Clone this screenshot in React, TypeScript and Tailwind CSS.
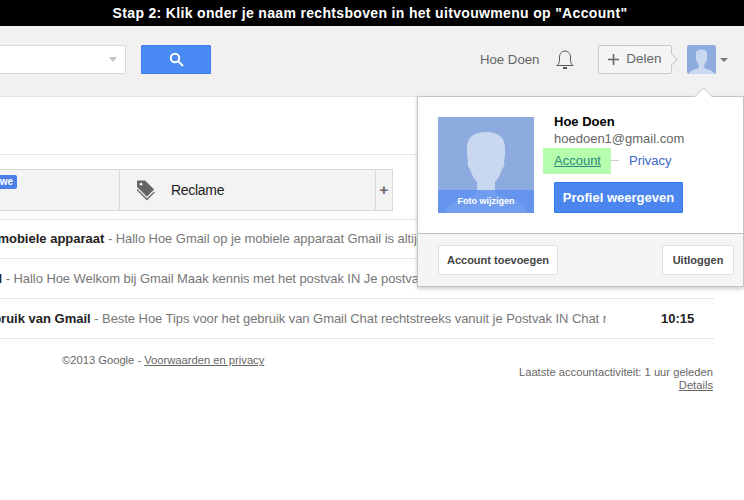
const FONT = "font-['Liberation_Sans',Arial,sans-serif]";

// mails: negatieve marge knipt het onderwerp links af, zoals in de schermafbeelding
function MailRow({ subject, body, time, clipClass, heightClass }: { subject: string; body: string; time?: string; clipClass: string; heightClass: string }) {
  return (
    <div className={`flex ${heightClass} items-center border-b border-[#e5e5e5]`}>
      <div className="w-[606px] overflow-hidden whitespace-nowrap text-[13px]">
        <div className={`flex ${clipClass}`}>
          <b className="font-bold text-[#222]">{subject}</b>
          <span className="whitespace-pre tracking-[-0.06px] text-[#777]"> - {body}</span>
        </div>
      </div>
      {time && <div className="ml-[55px] text-[13px] font-bold text-[#222]">{time}</div>}
    </div>
  );
}

function Avatar({ size }: { size: number }) {
  return (
    <svg width={size} height={size} viewBox="0 0 96 96" className="block">
      <rect width="96" height="96" fill="#8eabdf" />
      <path
        d="M48 15c-12 0-19 5-19 16 0 5 0 9 1 13-1 3 0 6 2 8 2 6 4 10 7 13v8c0 3-2 5-6 6-14 4-24 7-27 17h84c-3-10-13-13-27-17-4-1-6-3-6-6v-8c3-3 5-7 7-13 2-2 3-5 2-8 1-4 1-8 1-13 0-11-7-16-19-16z"
        fill="#c9d8f0"
      />
    </svg>
  );
}

export default function App() {
  return (
    <div className={`${FONT} relative h-[500px] w-[744px] overflow-hidden bg-white`}>
      <div className="flex h-[26px] items-center justify-center bg-black pr-[4px] text-[14px] font-bold tracking-[0.33px] text-white">
        Stap 2: Klik onder je naam rechtsboven in het uitvouwmenu op "Account"
      </div>

      {/* kopbalk */}
      <div className="flex h-[71px] items-center border-b border-[#e5e5e5] bg-[#f1f1f1] pb-[3px]">
        <div className="flex h-[29px] w-[126px] items-center justify-end rounded-r-[2px] border border-l-0 border-[#d9d9d9] bg-white pr-[8px]">
          <div className="h-0 w-0 border-x-[4px] border-t-[5px] border-x-transparent border-t-[#c4c4c4]" />
        </div>
        <button className="ml-[15px] flex h-[29px] w-[70px] items-center justify-center rounded-[1px] border border-[#3f7fe8] bg-[#4a8af4]">
          <svg width="15" height="15" viewBox="0 0 15 15" fill="none" stroke="#fff" strokeWidth="2">
            <circle cx="6" cy="6" r="4.2" />
            <path d="M9 9l5 5" />
          </svg>
        </button>
        <span className="ml-[269px] w-[59px] whitespace-nowrap text-[13.2px] text-[#666]">Hoe Doen</span>
        <svg width="18" height="21" viewBox="0 0 18 21" fill="none" stroke="#555" strokeWidth="1" className="ml-[17px]">
          <path d="M1 16.5h16c-1.500-1.500-2.500-3-2.500-5V8c0-3.500-2.500-6-5.500-6S3.500 4.500 3.500 8v3.500c0 2-1 3.500-2.500 5z" />
          <path d="M7 19h4" strokeWidth="2" />
        </svg>
        <div className="relative ml-[24px] flex h-[29px] w-[74px] items-center justify-center gap-[7px] rounded-[2px] border border-[#c8c8c8] bg-[#f5f5f5] text-[13.5px] text-[#666]">
          <svg width="11" height="11" viewBox="0 0 11 11" stroke="#666" strokeWidth="1.6">
            <path d="M5.500 0v11M0 5.500h11" />
          </svg>
          Delen
          <div className="absolute right-[-5px] top-[9px] h-[9px] w-[9px] rotate-45 border-r border-t border-[#c8c8c8] bg-[#f5f5f5]" />
        </div>
        <div className="ml-[15px] overflow-hidden rounded-[2px]">
          <Avatar size={29} />
        </div>
        <div className="ml-[4px] h-0 w-0 border-x-[4px] border-t-[4px] border-x-transparent border-t-[#777]" />
      </div>

      {/* inhoud */}
      <div className="h-[58px] border-b border-[#e5e5e5]" />
      <div className="mt-[14px] flex h-[42px] w-[393px] border-y border-r border-[#d9d9d9] bg-[#f3f3f3]">
        <div className="relative w-[120px] border-r border-[#d9d9d9]">
          <span className="absolute left-[-26px] top-[5px] rounded-[2px] bg-[#4d80e6] px-[4px] py-[1px] text-[10px] font-bold leading-[12px] text-white">
            Nieuwe
          </span>
        </div>
        <div className="flex w-[256px] items-center border-r border-[#d9d9d9] pl-[17px] text-[13px] text-[#222]">
          <svg width="18" height="21" viewBox="0 0 20 22" fill="#666">
            <path d="M0 0h9l10 10-8 8L0 7z" />
            <path d="M0 9l11 11 8-8 1 1-9 9L0 11z" />
            <circle cx="4.500" cy="4" r="1.500" fill="#f3f3f3" />
          </svg>
          <span className="ml-[16px] text-[14px] tracking-[-0.3px]">Reclame</span>
        </div>
        <div className="flex flex-1 items-center justify-center text-[15px] font-bold text-[#666]">+</div>
      </div>

      <div className="mt-[8px] w-[714px] border-t border-[#e5e5e5]">
        <MailRow
          subject="Gebruik Gmail op je mobiele apparaat"
          body="Hallo Hoe Gmail op je mobiele apparaat Gmail is altijd beschikbaar op je telefoon of tablet"
          clipClass="ml-[-129px]"
          heightClass="h-[39px]"
        />
        <MailRow
          subject="Welkom bij Gmail"
          body="Hallo Hoe Welkom bij Gmail Maak kennis met het postvak IN Je postvak IN is overzichtelijk"
          clipClass="ml-[-106px]"
          heightClass="h-[40px]"
        />
        <MailRow
          subject="Tips voor het gebruik van Gmail"
          body="Beste Hoe Tips voor het gebruik van Gmail Chat rechtstreeks vanuit je Postvak IN Chat met vrienden"
          time="10:15"
          clipClass="ml-[-107px]"
          heightClass="h-[40px]"
        />
      </div>

      {/* voettekst */}
      <div className="flex w-[713px] justify-between text-[11.2px] text-[#666]">
        <div className="ml-[62px] mt-[13px]">
          ©2013 Google - <span className="underline">Voorwaarden en privacy</span>
        </div>
        <div className="mt-[27px] text-right leading-[13px]">
          <div>Laatste accountactiviteit: 1 uur geleden</div>
          <div className="underline">Details</div>
        </div>
      </div>

      {/* uitvouwmenu */}
      <div className="absolute left-[417px] top-[96px] w-[327px] border border-[#c4c4c4] bg-white shadow-[0_2px_4px_rgba(0,0,0,0.2)]">
        <div className="absolute left-[279px] top-[-7px] h-[13px] w-[13px] rotate-45 border-l border-t border-[#d0d0d0] bg-white" />
        <div className="relative flex h-[136px] pl-[20px] pt-[20px]">
          <div className="relative h-[96px] w-[96px] overflow-hidden">
            <Avatar size={96} />
            <div className="absolute bottom-0 left-0 right-0 flex h-[23px] items-center justify-center bg-[#5a8ff0]/80 text-[9px] font-bold text-white">
              Foto wijzigen
            </div>
          </div>
          <div className="ml-[20px] flex flex-col">
            <div className="mt-[-4px] text-[13px] font-bold leading-[17px] text-black">Hoe Doen</div>
            <div className="text-[13px] leading-[17px] text-[#666]">hoedoen1@gmail.com</div>
            <div className="relative mt-[5px] flex h-[17px] items-center text-[13px]">
              <div className="absolute left-[-11px] top-[-4px] h-[26px] w-[68px] bg-[#b6fdad]" />
              <span className="relative text-[#2a8a7d] underline">Account</span>
              <div className="relative ml-[10px] h-px w-[8px] bg-[#ccc]" />
              <span className="relative ml-[10px] text-[#4166c9]">Privacy</span>
            </div>
            <button className="mt-[13px] flex h-[31px] w-[129px] items-center justify-center rounded-[1px] border border-[#3079ed] bg-[#4a86ee] text-[13px] font-bold text-white">
              Profiel weergeven
            </button>
          </div>
        </div>
        <div className="flex h-[53px] items-center justify-between border-t border-[#bebebe] bg-[#f5f5f5] pl-[20px] pr-[9px]">
          <div className="flex h-[30px] w-[120px] items-center justify-center rounded-[2px] border border-[#e0e0e0] bg-white text-[11px] font-bold text-[#444]">
            Account toevoegen
          </div>
          <div className="flex h-[30px] w-[72px] items-center justify-center rounded-[2px] border border-[#e0e0e0] bg-white text-[11px] font-bold text-[#444]">
            Uitloggen
          </div>
        </div>
      </div>
    </div>
  );
}
